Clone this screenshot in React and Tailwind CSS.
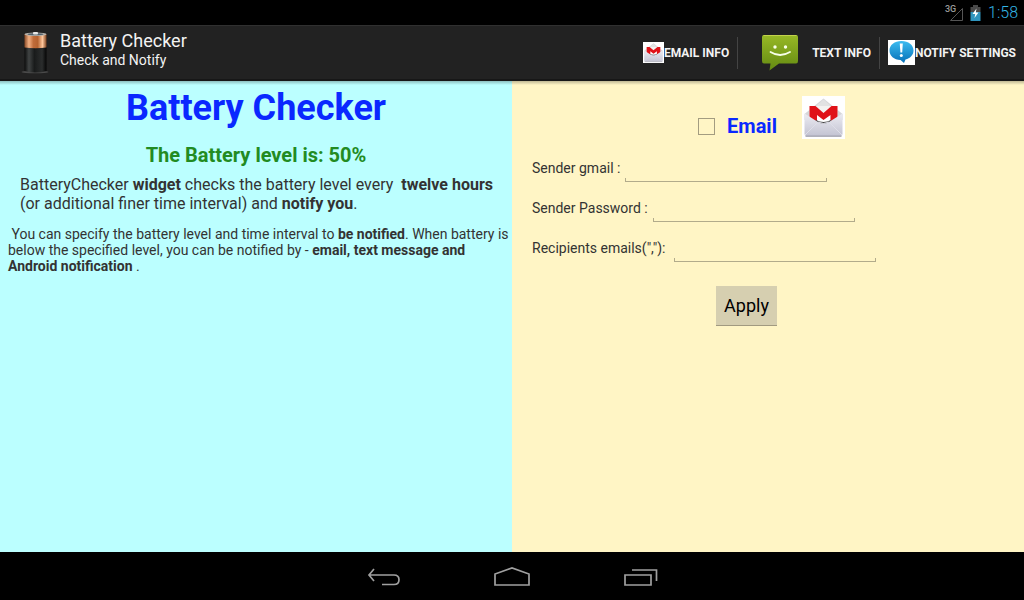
import { useState } from "react";

function BatteryIcon() {
  return (
    <svg className="h-12 w-8" viewBox="0 0 32 48" aria-hidden="true">
      <defs>
        <linearGradient id="copper">
          <stop offset="0" stopColor="#8a4a26" />
          <stop offset="0.2" stopColor="#f3b184" />
          <stop offset="0.4" stopColor="#c06c3a" />
          <stop offset="0.6" stopColor="#b5622f" />
          <stop offset="0.82" stopColor="#ffc79c" />
          <stop offset="1" stopColor="#7d421f" />
        </linearGradient>
        <linearGradient id="shell">
          <stop offset="0" stopColor="#0c0c0c" />
          <stop offset="0.2" stopColor="#414444" />
          <stop offset="0.45" stopColor="#191b1b" />
          <stop offset="0.8" stopColor="#2b2d2d" />
          <stop offset="1" stopColor="#050505" />
        </linearGradient>
      </defs>
      <ellipse cx="15" cy="43" rx="13.500" ry="1.300" fill="#4a4a4a" />
      <path d="M4.500 18h22v24q-11 3-22 0z" fill="url(#shell)" />
      <path d="M4.500 5h22v13.500q-11 1.500-22 0z" fill="url(#copper)" />
      <ellipse cx="15.500" cy="5.200" rx="11" ry="1.800" fill="#b9b3ac" />
      <ellipse cx="15.500" cy="5.200" rx="8" ry="1.100" fill="#50606a" />
      <rect x="13" y="3" width="5" height="2.500" rx="1" fill="#e6e6e6" />
    </svg>
  );
}

function MailIcon({ className }) {
  return (
    <svg className={className} viewBox="0 0 43 43" aria-hidden="true">
      <defs>
        <linearGradient id="paper" x1="0" y1="0" x2="0" y2="1">
          <stop offset="0" stopColor="#ececf2" />
          <stop offset="1" stopColor="#c3c3d2" />
        </linearGradient>
      </defs>
      <path fill="#fff" d="M0 0h43v43H0z" />
      <path d="M2.500 18 21.500 2.500 40.500 18v6h-38z" fill="#d6d6d8" />
      <path d="M7.500 10h28v16h-28z" fill="#f4f2f0" />
      <path d="M14 10 21.500 3.500 29 10z" fill="#e2e2e2" />
      <path d="M15 18h13v8H15z" fill="#fff" />
      <path d="M7.500 10h6l8 7 8-7h6v13l-7 4v-8l-7 5-6.500-5v8l-7.500-4z" fill="#e01218" />
      <path d="M14 24q7.500 4 15 0l2 2-9.500 3.500L12 26z" fill="#454545" />
      <path d="M2.500 17.500 16 26q5.500 3 11 0l13.500-8.500V38q0 2-2 2h-34q-2 0-2-2z" fill="url(#paper)" />
      <path d="M3 39 16 26q5.500 3 11 0l13 13" fill="none" stroke="#dedee8" />
      <path d="M3.500 40.200h36" stroke="#8d8d9b" />
    </svg>
  );
}

function MessageIcon() {
  return (
    <svg className="h-9 w-9" viewBox="0 0 36 36" aria-hidden="true">
      <defs>
        <linearGradient id="bubbleGreen" x1="0" y1="0" x2="0" y2="1">
          <stop offset="0" stopColor="#98b826" />
          <stop offset="1" stopColor="#638a12" />
        </linearGradient>
      </defs>
      <path d="M2 0h32q2 0 2 2v24q0 2.500-2 2.500H17L7.500 35.500l1-7H2q-2 0-2-2.500V2q0-2 2-2z" fill="url(#bubbleGreen)" />
      <path d="M1.500 .5h33" stroke="#c3d24c" />
      <circle cx="13" cy="12" r="1.700" fill="#f7ffe8" />
      <circle cx="23.500" cy="12" r="1.700" fill="#f7ffe8" />
      <path d="M8.500 17q9.500 6 19.500 0" fill="none" stroke="#f7ffe8" strokeWidth="1.800" strokeLinecap="round" />
    </svg>
  );
}

function NoticeIcon() {
  return (
    <svg className="h-[25px] w-[27px]" viewBox="0 0 27 25" aria-hidden="true">
      <defs>
        <linearGradient id="bubbleBlue" x1="0" y1="0" x2="0" y2="1">
          <stop offset="0" stopColor="#3cbcf0" />
          <stop offset="1" stopColor="#0670b8" />
        </linearGradient>
      </defs>
      <path fill="#fff" d="M0 0h27v25H0z" />
      <path d="M13.500 1C20.500 1 25.500 5 25.500 10.500c0 4.500-3.500 8-8 9L16 23l-3.500-3C6 19.800 1.500 15.800 1.500 10.500 1.500 5 6.500 1 13.500 1z" fill="url(#bubbleBlue)" />
      <path d="M11.800 3.500h3l-.6 9h-1.800z" fill="#fff" />
      <circle cx="13.300" cy="15.500" r="1.500" fill="#fff" />
    </svg>
  );
}

function StatusBar() {
  return (
    <div className="flex h-[25px] items-center justify-end bg-black pr-[6px] text-[#33b5e5]">
      <svg className="mr-[6px] h-[18px] w-5" viewBox="0 0 20 18" aria-hidden="true">
        <text x="1" y="8" fontSize="9" fontWeight="500" fontFamily="Roboto, sans-serif" fill="#9a9a9a">3G</text>
        <path d="M6.500 16.500 18.500 4.500v12z" fill="none" stroke="#555" />
      </svg>
      <svg className="mr-[7px] h-4 w-[11px]" viewBox="0 0 11 16" aria-hidden="true">
        <path d="M3 0h5v2h2.500v5H.5V2H3z" fill="#4a4a4a" />
        <path d="M.5 7h10v9H.5z" fill="#2f94bd" />
        <path d="M6.500 3.500 2.500 9h2.700L4.500 13l4-5.500H5.800z" fill="#fff" />
      </svg>
      <span className="text-base font-light">1:58</span>
    </div>
  );
}

function ActionBar() {
  return (
    <header className="flex h-14 items-center justify-between border-t border-b-2 border-t-[#303030] border-b-[#171717] bg-[#222] text-[#f3f3f3]">
      <div className="flex items-start gap-2 pl-5">
        <BatteryIcon />
        <div>
          <div className="text-lg leading-6">Battery Checker</div>
          <div className="text-sm leading-[14px]">Check and Notify</div>
        </div>
      </div>
      <nav className="flex items-center text-xs font-bold">
        <button className="flex items-center px-2">
          <MailIcon className="h-[21px] w-[21px]" />
          EMAIL INFO
        </button>
        <button className="flex h-8 items-center gap-[14px] border-l border-[#444] pr-2 pl-6">
          <MessageIcon />
          TEXT INFO
        </button>
        <button className="flex h-8 items-center border-l border-[#444] px-2">
          <NoticeIcon />
          NOTIFY SETTINGS
        </button>
      </nav>
    </header>
  );
}

function Field({ id, label, type }) {
  return (
    <div className="flex h-10 items-start gap-[5px]">
      <label htmlFor={id} className="text-sm leading-5 whitespace-pre">{label}</label>
      <div className="w-[202px]">
        <input id={id} type={type} className="block h-5 w-full bg-transparent px-2 text-sm outline-none" />
        <div className="h-1 border-x border-b border-[#b2ab8b]" />
      </div>
    </div>
  );
}

function Intro() {
  return (
    <section className="bg-[#bbffff] text-[#333]">
      <h1 className="pt-[6px] text-center text-4xl leading-[42px] font-bold text-[#0a28ff]">Battery Checker</h1>
      <h2 className="pt-[14px] text-center text-xl leading-6 font-bold text-[#228b22]">The Battery level is: 50%</h2>
      <p className="pt-2 pl-5 text-base leading-[19px]">
        BatteryChecker <b>widget</b> checks the battery level every&nbsp; <b>twelve hours</b>
        <br />
        (or additional finer time interval) and <b>notify you</b>.
      </p>
      <p className="pt-[13px] pl-2 text-sm leading-4">
        &nbsp;You can specify the battery level and time interval to <b>be notified</b>. When battery is below the
        specified level, you can be notified by - <b>email, text message and Android notification</b> .
      </p>
    </section>
  );
}

function EmailForm() {
  const [enabled, setEnabled] = useState(false);
  return (
    <form className="bg-[#fff5c5] px-5 pt-[15px] text-[#333]" onSubmit={(e) => e.preventDefault()}>
      <div className="flex items-start justify-center pl-[7px]">
        <label className="flex items-center gap-3 pt-4 text-xl font-bold text-[#0a28ff]">
          <input
            type="checkbox"
            checked={enabled}
            onChange={(e) => setEnabled(e.target.checked)}
            className="h-[17px] w-[17px] appearance-none border border-[#a39c80] checked:bg-[#33b5e5]"
          />
          Email
        </label>
        <MailIcon className="ml-[25px] h-[43px] w-[43px]" />
      </div>
      <div className="pt-[18px]">
        <Field id="sender" label="Sender gmail :" type="email" />
        <Field id="password" label="Sender Password :" type="password" />
        <Field id="recipients" label={'Recipients emails(","): '} type="text" />
      </div>
      <div className="flex justify-center pt-2 pr-[43px]">
        <button className="h-10 border-b border-[#a19a80] bg-[#d6cfb0] px-2 text-lg text-black">Apply</button>
      </div>
    </form>
  );
}

function NavigationBar() {
  return (
    <nav className="flex h-12 items-center justify-center gap-[93px] bg-black pt-px">
      <button aria-label="Back">
        <svg className="h-6 w-9" viewBox="0 0 36 24" fill="none" stroke="#a0a0a0" strokeWidth="1.700" aria-hidden="true">
          <path d="M9 4 4 10l5 6M4 10h25q5 0 5 4.700t-5 4.800H17" />
        </svg>
      </button>
      <button aria-label="Home">
        <svg className="h-6 w-9" viewBox="0 0 36 24" fill="none" stroke="#a0a0a0" strokeWidth="1.700" aria-hidden="true">
          <path d="M1 20V9L18 3l17 6v11z" />
        </svg>
      </button>
      <button aria-label="Recent apps">
        <svg className="h-6 w-9" viewBox="0 0 36 24" fill="none" stroke="#a0a0a0" strokeWidth="1.700" aria-hidden="true">
          <path d="M2 10h26v10H2zM9 5h24.500v11" />
        </svg>
      </button>
    </nav>
  );
}

export default function App() {
  return (
    <div className="flex min-h-screen flex-col font-['Roboto',sans-serif]">
      <StatusBar />
      <ActionBar />
      <main className="relative grid flex-1 grid-cols-2">
        <Intro />
        <EmailForm />
        <div className="pointer-events-none absolute inset-x-0 top-0 h-1 bg-linear-to-b from-black/25 to-transparent" />
      </main>
      <NavigationBar />
    </div>
  );
}
